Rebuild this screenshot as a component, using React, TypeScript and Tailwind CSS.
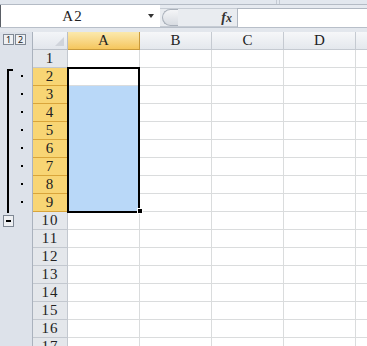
export default function App() {
  const rows = Array.from({ length: 17 }, (_, i) => i + 1);
  const cols = ["B", "C", "D"];
  return (
    <div className="w-[367px] h-[346px] overflow-hidden bg-white relative font-['Liberation_Serif',serif] text-[15px] text-[#222] select-none">
      {/* top strip */}
      <div className="h-[5px] bg-[#e2e7ee] border-b border-[#b4bbc5] relative">
        <div className="absolute left-[276px] top-0 w-[4px] h-[4px] border-l border-r border-[#c4cad3]" />
      </div>
      {/* formula bar */}
      <div className="h-[23px] flex border-b border-[#b8bfc9] bg-[#e6eaf0]">
        <div className="w-[160px] bg-white border-l border-[#5a5f66] flex items-center">
          <div className="flex-1 text-center leading-none pl-[2px] tracking-[1px]">A2</div>
          <div className="w-[18px] flex justify-center items-center">
            <div className="w-0 h-0 border-l-[3.5px] border-r-[3.5px] border-t-[4px] border-l-transparent border-r-transparent border-t-[#333]" />
          </div>
        </div>
        <div className="w-[77px] flex items-center pt-[3px]">
          <div className="h-[19px] w-full flex items-center bg-[#e9ecf0] border-t border-b border-[#c6ccd4] relative">
            <div className="ml-[2px] w-[16px] h-[17px] rounded-l-full border border-r-0 border-[#a9b0ba] bg-gradient-to-b from-[#f4f5f7] to-[#d8dce2]" />
            <div className="flex-1" />
            <div className="mr-[5px] italic font-bold text-[14px] leading-none text-[#333]">
              f<span className="text-[12px]">x</span>
            </div>
          </div>
        </div>
        <div className="flex-1 bg-white border-l border-t border-[#b0b7c1] mt-[3px]" />
      </div>
      <div className="h-[4px] bg-[#e3e7ed]" />
      {/* sheet */}
      <div className="flex">
        {/* outline column */}
        <div className="w-[33px] shrink-0 bg-[#dde2ea] border-r border-[#aab2bd] relative h-[314px]">
          <div className="flex gap-[1px] pl-[3px] pt-[2px]">
            <div className="w-[11px] h-[11px] border border-[#7f8894] bg-[#eef0f3] text-[9px] leading-[9px] text-center font-sans">1</div>
            <div className="w-[11px] h-[11px] border border-[#7f8894] bg-[#eef0f3] text-[9px] leading-[9px] text-center font-sans">2</div>
          </div>
          {/* bracket */}
          <div className="absolute left-[7px] top-[37px] w-[2px] h-[144px] bg-black" />
          <div className="absolute left-[7px] top-[37px] w-[6px] h-[2px] bg-black" />
          {[2, 3, 4, 5, 6, 7, 8, 9].map((r) => (
            <div
              key={r}
              className="absolute left-[21px] w-[2px] h-[2px] bg-black"
              style={{ top: 18 * r + 7 }}
            />
          ))}
          <div className="absolute left-[3px] top-[183px] w-[11px] h-[12px] border border-[#7f8894] bg-[#eef0f3] flex items-center justify-center">
            <div className="w-[5px] h-[2px] bg-black" />
          </div>
        </div>
        {/* grid */}
        <div className="flex-1 flex flex-col">
          {/* header */}
          <div className="flex h-[18px]">
            <div className="w-[35px] shrink-0 border-r border-b border-[#b9bfc8] bg-gradient-to-b from-[#f3f5f8] to-[#e2e6ec] relative">
              <div className="absolute right-[3px] bottom-[3px] w-0 h-0 border-b-[9px] border-l-[9px] border-l-transparent border-b-[#d0d4db]" />
            </div>
            <div className="w-[72px] shrink-0 border-r border-b border-[#c99a3b] bg-gradient-to-b from-[#fbe9ad] to-[#f5c65c] flex items-center justify-center leading-none">A</div>
            {cols.map((c) => (
              <div key={c} className="w-[72px] shrink-0 border-r border-b border-[#c5cad1] bg-gradient-to-b from-[#f6f7f9] to-[#e4e8ed] flex items-center justify-center leading-none">{c}</div>
            ))}
            <div className="flex-1 border-b border-[#c5cad1] bg-gradient-to-b from-[#f6f7f9] to-[#e4e8ed]" />
          </div>
          {rows.map((r) => {
            const sel = r >= 2 && r <= 9;
            return (
              <div key={r} className="flex h-[18px]">
                <div
                  className={
                    sel
                      ? "w-[35px] shrink-0 border-r border-b border-[#d9a53a] bg-[#f8d574] flex items-center justify-center leading-none tracking-[1px]"
                      : "w-[35px] shrink-0 border-r border-b border-[#c3c8cf] bg-[#e4e7eb] flex items-center justify-center leading-none tracking-[1px]"
                  }
                >
                  {r}
                </div>
                <div
                  className={
                    r >= 3 && r <= 9
                      ? "w-[72px] shrink-0 border-r border-b border-[#b9d8f8] bg-[#b9d8f8]"
                      : "w-[72px] shrink-0 border-r border-b border-[#dadcdd] bg-white"
                  }
                />
                {cols.map((c) => (
                  <div key={c} className="w-[72px] shrink-0 border-r border-b border-[#dadcdd]" />
                ))}
                <div className="flex-1 border-b border-[#dadcdd]" />
              </div>
            );
          })}
        </div>
      </div>
      {/* selection border */}
      <div className="absolute left-[67px] top-[67px] w-[73px] h-[146px] border-2 border-black pointer-events-none" />
      <div className="absolute left-[137px] top-[208px] w-[6px] h-[6px] bg-black border border-white pointer-events-none" />
    </div>
  );
}
